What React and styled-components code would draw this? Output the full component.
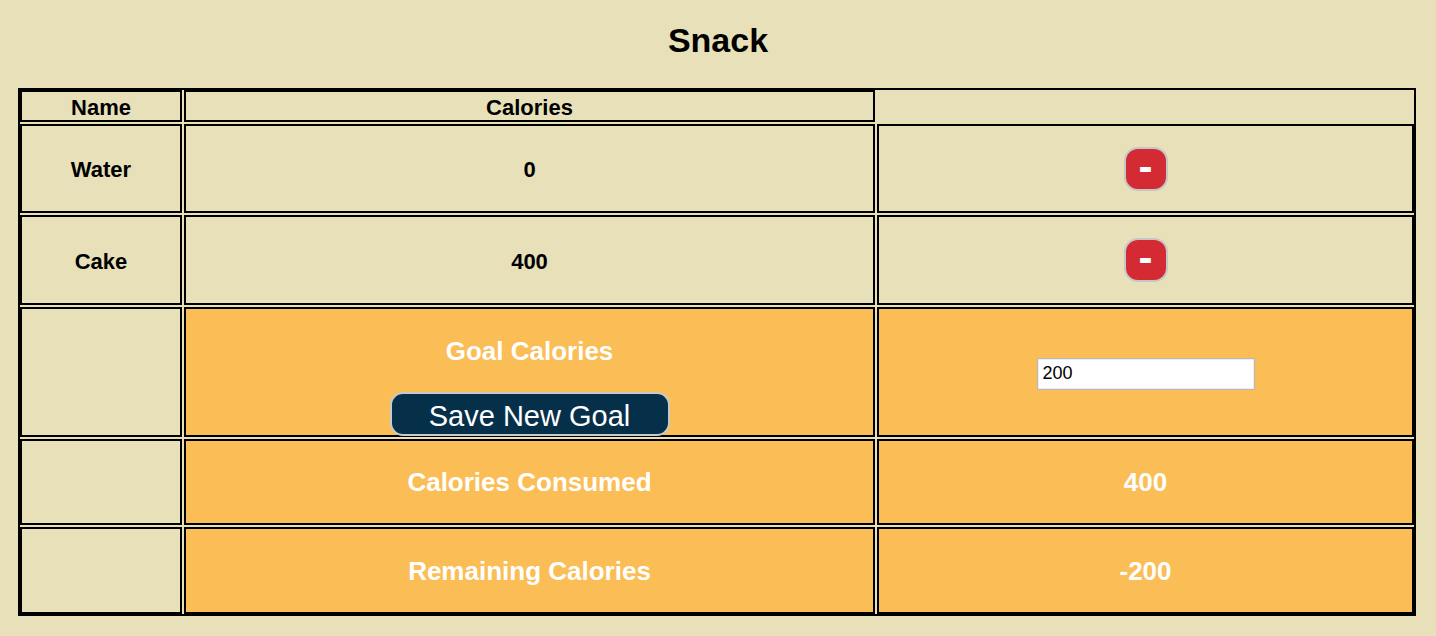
import { useState } from "react"
import styled, { createGlobalStyle } from "styled-components"

const BEIGE = "#e8e0b9"
const ORANGE = "#fbbd55"

const GlobalStyle = createGlobalStyle`
  html, body {
    margin: 0;
    padding: 0;
    background: ${BEIGE};
    font-family: "Liberation Sans", Arial, sans-serif;
  }
`

const Page = styled.div`
  width: 1436px;
  min-height: 636px;
  padding-top: 20px;
  box-sizing: border-box;
`

const Title = styled.h1`
  margin: 0 0 28px;
  font-size: 34px;
  line-height: 40px;
  font-weight: 700;
  text-align: center;
  color: #000;
`

const Table = styled.div`
  display: grid;
  grid-template-columns: 162px 691px 537px;
  grid-template-rows: 32px 89px 90px 130px 86px 87px;
  gap: 2px;
  width: 1398px;
  margin-left: 18px;
  border: 2px solid #000;
  box-sizing: border-box;
  background: ${BEIGE};
`

const Cell = styled.div`
  box-sizing: border-box;
  border: 2px solid #000;
  display: flex;
  align-items: center;
  justify-content: center;
  padding-top: ${(p) => (p.$flush || p.$big ? "0" : "3px")};
  background: ${(p) => (p.$tone === "orange" ? ORANGE : BEIGE)};
  color: ${(p) => (p.$tone === "orange" ? "#fff" : "#000")};
  font-weight: 700;
  font-size: ${(p) => (p.$big ? "26px" : "22px")};
  line-height: 1;
`

const GoalCell = styled(Cell)`
  flex-direction: column;
  justify-content: flex-start;
  padding-top: 27px;
`

const GoalLabel = styled.div`
  line-height: 30px;
`

const SaveButton = styled.button`
  margin-top: 26px;
  width: 280px;
  height: 44px;
  flex-shrink: 0;
  box-sizing: border-box;
  border: 2px solid #c9c9c9;
  border-radius: 13px;
  background: #06304a;
  color: #fff;
  font-family: "Liberation Sans", Arial, sans-serif;
  font-size: 29px;
  font-weight: 400;
  line-height: 1;
  padding: 4px 0 0;
  cursor: pointer;
`

const RemoveButton = styled.button`
  width: 44px;
  height: 44px;
  box-sizing: border-box;
  border: 2px solid #c6c6c6;
  border-radius: 14px;
  background: #d42a33;
  color: #fff;
  font-family: "Liberation Sans", Arial, sans-serif;
  font-size: 42px;
  font-weight: 700;
  line-height: 1;
  padding: 0 0 4px;
  display: flex;
  align-items: center;
  justify-content: center;
  cursor: pointer;
`

const GoalInput = styled.input`
  width: 218px;
  height: 32px;
  box-sizing: border-box;
  border: 1px solid #b8b8b8;
  box-shadow: inset 0 0 0 1px #ececec;
  background: #fff;
  padding: 0 5px;
  font-family: "Liberation Sans", Arial, sans-serif;
  font-size: 18px;
  color: #000;
  outline: none;
`

export default function App() {
  const [foods, setFoods] = useState([
    { name: "Water", calories: 0 },
    { name: "Cake", calories: 400 },
  ])
  const [goal, setGoal] = useState("200")

  const consumed = foods.reduce((sum, f) => sum + f.calories, 0)
  const remaining = Number(goal) - consumed

  return (
    <Page>
      <GlobalStyle />
      <Title>Snack</Title>
      <Table>
        <Cell>Name</Cell>
        <Cell>Calories</Cell>
        <div />

        {foods.map((food, i) => (
          <FoodRow
            key={food.name}
            food={food}
            onRemove={() => setFoods(foods.filter((_, j) => j !== i))}
          />
        ))}

        <Cell />
        <GoalCell $tone="orange" $big>
          <GoalLabel>Goal Calories</GoalLabel>
          <SaveButton>Save New Goal</SaveButton>
        </GoalCell>
        <Cell $tone="orange">
          <GoalInput value={goal} onChange={(e) => setGoal(e.target.value)} />
        </Cell>

        <Cell />
        <Cell $tone="orange" $big>Calories Consumed</Cell>
        <Cell $tone="orange" $big>{consumed}</Cell>

        <Cell />
        <Cell $tone="orange" $big>Remaining Calories</Cell>
        <Cell $tone="orange" $big>{remaining}</Cell>
      </Table>
    </Page>
  )
}

function FoodRow({ food, onRemove }) {
  return (
    <>
      <Cell>{food.name}</Cell>
      <Cell>{food.calories}</Cell>
      <Cell $flush>
        <RemoveButton onClick={onRemove}>-</RemoveButton>
      </Cell>
    </>
  )
}
